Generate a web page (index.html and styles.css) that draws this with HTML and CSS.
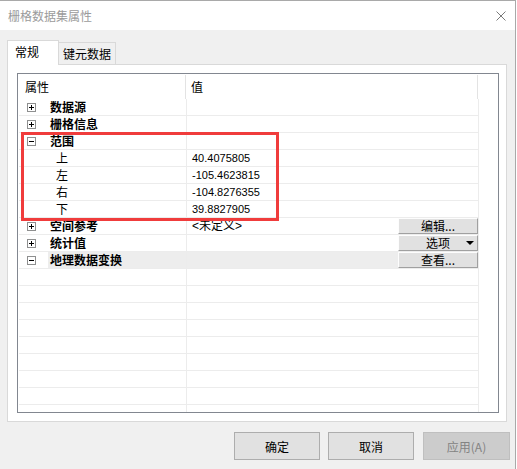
FILE: index.html
```html
<!DOCTYPE html>
<html lang="zh">
<head>
<meta charset="utf-8">
<title>栅格数据集属性</title>
<link rel="stylesheet" href="styles.css">
</head>
<body>
<div class="window">
  <div class="titlebar">
    <span class="title">栅格数据集属性</span>
    <svg class="close" width="10" height="10" viewBox="0 0 10 10"><path d="M0.5 0.5L9.5 9.5M9.5 0.5L0.5 9.5" stroke="#7a7a7a" stroke-width="1" fill="none"/></svg>
  </div>
  <div class="client">
    <div class="tabs">
      <div class="tab active">常规</div>
      <div class="tab">键元数据</div>
    </div>
    <div class="panel">
      <div class="list">
        <div class="head">
          <div class="hc name">属性</div>
          <div class="hc val">值</div>
        </div>
        <div class="row">
          <div class="c name"><svg class="exp" width="9" height="9" viewBox="0 0 9 9"><rect x="0.5" y="0.5" width="8" height="8" fill="#fff" stroke="#8e8f8f"/><path d="M2 4.5h5M4.5 2v5" stroke="#000"/></svg><span class="lbl">数据源</span></div>
          <div class="c val"></div>
        </div>
        <div class="row">
          <div class="c name"><svg class="exp" width="9" height="9" viewBox="0 0 9 9"><rect x="0.5" y="0.5" width="8" height="8" fill="#fff" stroke="#8e8f8f"/><path d="M2 4.5h5M4.5 2v5" stroke="#000"/></svg><span class="lbl">栅格信息</span></div>
          <div class="c val"></div>
        </div>
        <div class="row">
          <div class="c name"><svg class="exp" width="9" height="9" viewBox="0 0 9 9"><rect x="0.5" y="0.5" width="8" height="8" fill="#fff" stroke="#8e8f8f"/><path d="M2 4.5h5" stroke="#000"/></svg><span class="lbl">范围</span></div>
          <div class="c val"></div>
        </div>
        <div class="row">
          <div class="c name"><span class="sub">上</span></div>
          <div class="c val"><span class="num">40.4075805</span></div>
        </div>
        <div class="row">
          <div class="c name"><span class="sub">左</span></div>
          <div class="c val"><span class="num">-105.4623815</span></div>
        </div>
        <div class="row">
          <div class="c name"><span class="sub">右</span></div>
          <div class="c val"><span class="num">-104.8276355</span></div>
        </div>
        <div class="row">
          <div class="c name"><span class="sub">下</span></div>
          <div class="c val"><span class="num">39.8827905</span></div>
        </div>
        <div class="row">
          <div class="c name"><svg class="exp" width="9" height="9" viewBox="0 0 9 9"><rect x="0.5" y="0.5" width="8" height="8" fill="#fff" stroke="#8e8f8f"/><path d="M2 4.5h5M4.5 2v5" stroke="#000"/></svg><span class="lbl">空间参考</span></div>
          <div class="c val"><span class="txt">&lt;未定义&gt;</span><span class="sbtn">编辑...</span></div>
        </div>
        <div class="row">
          <div class="c name"><svg class="exp" width="9" height="9" viewBox="0 0 9 9"><rect x="0.5" y="0.5" width="8" height="8" fill="#fff" stroke="#8e8f8f"/><path d="M2 4.5h5M4.5 2v5" stroke="#000"/></svg><span class="lbl">统计值</span></div>
          <div class="c val"><span class="sbtn drop">选项</span></div>
        </div>
        <div class="row selected">
          <div class="c name"><svg class="exp" width="9" height="9" viewBox="0 0 9 9"><rect x="0.5" y="0.5" width="8" height="8" fill="#fff" stroke="#8e8f8f"/><path d="M2 4.5h5" stroke="#000"/></svg><span class="lbl sel">地理数据变换</span></div>
          <div class="c val sel"><span class="sbtn">查看...</span></div>
        </div>
        <div class="row"><div class="c name"></div><div class="c val"></div></div>
        <div class="row"><div class="c name"></div><div class="c val"></div></div>
        <div class="row"><div class="c name"></div><div class="c val"></div></div>
        <div class="row"><div class="c name"></div><div class="c val"></div></div>
        <div class="row"><div class="c name"></div><div class="c val"></div></div>
        <div class="row"><div class="c name"></div><div class="c val"></div></div>
        <div class="row"><div class="c name"></div><div class="c val"></div></div>
        <div class="row"><div class="c name"></div><div class="c val"></div></div>
        <div class="row"><div class="c name"></div><div class="c val"></div></div>
        <div class="mark"></div>
      </div>
    </div>
    <div class="actions">
      <div class="btn">确定</div>
      <div class="btn gap8">取消</div>
      <div class="btn apply disabled">应用(A)</div>
    </div>
  </div>
</div>
</body>
</html>
```

FILE: styles.css
```css
html, body {
  margin: 0;
  padding: 0;
  background: #ffffff;
}

body {
  font-family: "Noto Sans CJK SC", "Liberation Sans", sans-serif;
  font-size: 12px;
  color: #000;
}

.window {
  width: 516px;
  height: 469px;
  box-sizing: border-box;
  border-top: 1px solid #a9a9a9;
  border-right: 1px solid #a9a9a9;
  display: flex;
  flex-direction: column;
}

.titlebar {
  height: 29px;
  flex: none;
  background: #ffffff;
  display: flex;
  align-items: center;
  justify-content: space-between;
  padding: 1px 9px 0 8px;
  box-sizing: border-box;
}

.title {
  color: #9b9b9b;
  font-size: 12px;
  line-height: 16px;
}

.close {
  display: block;
  margin-top: -1px;
}

.client {
  flex: 1;
  background: #f0f0f0;
  padding: 10px 0 0 7px;
}

.tabs {
  display: flex;
  align-items: flex-start;
  height: 24px;
  position: relative;
  z-index: 1;
}

.tab {
  box-sizing: border-box;
  height: 22px;
  margin-top: 2px;
  width: 57px;
  padding: 1px 0 0 4px;
  line-height: 20px;
  border: 1px solid #d9d9d9;
  border-left: none;
  border-bottom: none;
  background: #f0f0f0;
  white-space: nowrap;
}

.tab.active {
  height: 25px;
  margin-top: 0;
  width: 52px;
  padding: 1px 0 0 7px;
  border-left: 1px solid #d9d9d9;
  background: #ffffff;
}

.panel {
  width: 500px;
  height: 358px;
  box-sizing: border-box;
  border: 1px solid #d9d9d9;
  background: #ffffff;
  padding: 8px 0 0 9px;
}

.list {
  position: relative;
  width: 482px;
  height: 340px;
  box-sizing: border-box;
  border: 1px solid #828790;
  padding-left: 1px;
  overflow: hidden;
}

.head {
  display: flex;
  align-items: flex-end;
  height: 25px;
}

.hc {
  height: 24px;
  box-sizing: border-box;
  border-right: 1px solid #e3e3e3;
  line-height: 24px;
}

.hc.name {
  width: 167px;
  padding-left: 6px;
}

.hc.val {
  width: 292px;
  padding-left: 5px;
}

.row {
  display: flex;
  width: 460px;
  height: 17px;
  box-sizing: border-box;
  border-bottom: 1px solid #ececec;
}

.c {
  height: 16px;
  box-sizing: border-box;
  border-right: 1px solid #ececec;
  display: flex;
  align-items: center;
  line-height: 16px;
}

.c.name {
  width: 168px;
}

.c.val {
  width: 292px;
  padding-left: 5px;
}

.exp {
  display: block;
  flex: none;
  margin-left: 8px;
}

.lbl {
  margin-left: 14px;
  font-weight: 700;
  font-size: 12px;
}

.lbl.sel {
  margin-left: 12px;
  padding-left: 2px;
  flex: 1;
  height: 16px;
  background: #ededed;
}

.c.val.sel {
  background: #ededed;
}

.sub {
  padding-left: 37px;
}

.num {
  font-family: "Liberation Sans", sans-serif;
  font-size: 11px;
}

.txt {
  font-family: "Liberation Sans", "Noto Sans CJK SC", sans-serif;
  font-size: 12px;
}

.sbtn {
  position: relative;
  margin-left: auto;
  width: 80px;
  height: 16px;
  box-sizing: border-box;
  border: 1px solid;
  border-color: #fdfdfd #a0a0a0 #a0a0a0 #fdfdfd;
  background: #e1e1e1;
  text-align: center;
  line-height: 14px;
  font-size: 12px;
}

.sbtn.drop::after {
  content: "";
  position: absolute;
  right: 3px;
  top: 5px;
  border-left: 4px solid transparent;
  border-right: 4px solid transparent;
  border-top: 4px solid #000;
}

.mark {
  position: absolute;
  left: 3px;
  top: 58px;
  width: 258px;
  height: 89px;
  box-sizing: border-box;
  border: 3px solid #f03c3c;
}

.actions {
  display: flex;
  justify-content: flex-end;
  margin-top: 10px;
  padding-right: 5px;
}

.btn {
  width: 86px;
  height: 28px;
  box-sizing: border-box;
  border: 1px solid #adadad;
  background: #e1e1e1;
  display: flex;
  align-items: center;
  justify-content: center;
  font-size: 12px;
}

.btn.gap8 {
  margin-left: 8px;
}

.btn.apply {
  width: 87px;
  margin-left: 9px;
}

.btn.disabled {
  background: #cccccc;
  border-color: #bfbfbf;
  color: #838383;
}
```
